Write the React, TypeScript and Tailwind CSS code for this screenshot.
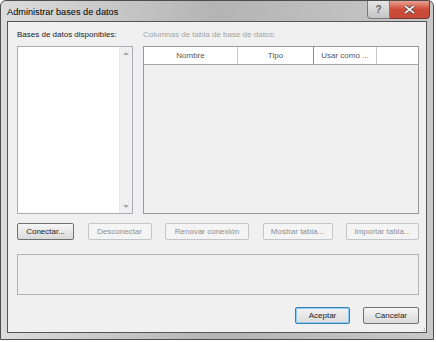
const FONT = { fontFamily: '"Liberation Sans", Arial, sans-serif' };

function Btn({ label, w, disabled, primary }: { label: string; w: number; disabled?: boolean; primary?: boolean }) {
  const base = "h-[17px] flex items-center justify-center rounded-[2px] text-[8px] leading-none border";
  const cls = disabled
    ? "border-[#c3c6c9] bg-[#f4f4f4] text-[#8d8d8d]"
    : primary
    ? "border-[#3c7fb1] bg-gradient-to-b from-[#f2f2f2] to-[#dcdcdc] text-[#1a1a1a] shadow-[inset_0_0_0_1px_#8ccdf6]"
    : "border-[#707070] bg-gradient-to-b from-[#f6f6f6] to-[#dadada] text-[#1a1a1a]";
  return (
    <div className={`${base} ${cls}`} style={{ width: w }}>
      {label}
    </div>
  );
}

export default function App() {
  return (
    <div className="w-[436px] h-[342px] bg-white" style={FONT}>
      <div className="w-[434px] h-[340px] flex flex-col rounded-t-[6px] border border-[#4d4d4d] bg-gradient-to-r from-[#dcdcdc] via-[#b4b4b4] to-[#c8c8c8]">
        {/* Title bar */}
        <div className="h-[21px] flex items-start relative">
          <span className="pl-[6px] pt-[7px] text-[9.2px] leading-none text-black">Administrar bases de datos</span>
          <div className="ml-auto flex mr-[3px]">
            <div className="w-[23px] h-[18px] flex items-center justify-center border border-[#7a7a7a] border-t-0 rounded-bl-[4px] bg-gradient-to-b from-[#e6e6e6] to-[#c4c4c4]">
              <span className="text-[10px] font-bold text-[#666] leading-none">?</span>
            </div>
            <div className="w-[40px] h-[18px] flex items-center justify-center border border-[#7a3a34] border-t-0 border-l-0 rounded-br-[4px] bg-gradient-to-b from-[#e8a090] via-[#cd4a37] to-[#c64a3a]">
              <svg width="11" height="9" viewBox="0 0 11 9">
                <path d="M1 1 L10 8 M10 1 L1 8" stroke="#3b3b3b" strokeWidth="3" />
                <path d="M1 1 L10 8 M10 1 L1 8" stroke="#f4f4f4" strokeWidth="1.6" />
              </svg>
            </div>
          </div>
        </div>

        {/* Client area */}
        <div className="flex-1 mx-[6px] mb-[6px] border border-[#555] bg-[#f0f0f0] flex flex-col pl-[9px] pr-[7px] pt-[9px] pb-[8px] relative">
          <div className="grid grid-cols-[116px_1fr] gap-x-[10px]">
            <div className="text-[8px] leading-none text-[#1a1a1a] h-[15px]">Bases de datos disponibles:</div>
            <div className="text-[8px] leading-none text-[#a3a3a3] h-[15px]">Columnas de tabla de base de datos:</div>

            {/* Left list */}
            <div className="h-[168px] border border-[#abadb3] bg-white flex">
              <div className="flex-1" />
              <div className="w-[13px] bg-[#f0f0f0] border-l border-[#e8e8e8] flex flex-col items-center justify-between py-[5px]">
                <div className="w-0 h-0 border-l-[3px] border-r-[3px] border-b-[3px] border-l-transparent border-r-transparent border-b-[#a8a8a8]" />
                <div className="w-0 h-0 border-l-[3px] border-r-[3px] border-t-[3px] border-l-transparent border-r-transparent border-t-[#a8a8a8]" />
              </div>
            </div>

            {/* Right list view */}
            <div className="h-[168px] border border-[#9a9a9a] bg-[#f0f0f0] flex flex-col">
              <div className="h-[18px] flex bg-white border-b border-[#a8a8a8] text-[8px] text-[#555] leading-none">
                <div className="w-[94px] flex items-center justify-center border-r border-[#c8c8c8]">Nombre</div>
                <div className="w-[76px] flex items-center justify-center border-r border-[#8c8c8c]">Tipo</div>
                <div className="w-[63px] flex items-center justify-center border-r border-[#c8c8c8]">Usar como ...</div>
                <div className="flex-1" />
              </div>
            </div>
          </div>

          {/* Action buttons */}
          <div className="mt-[9px] flex justify-between">
            <Btn label="Conectar..." w={57} />
            <Btn label="Desconectar" w={64} disabled />
            <Btn label="Renovar conexión" w={84} disabled />
            <Btn label="Mostrar tabla..." w={70} disabled />
            <Btn label="Importar tabla..." w={73} disabled />
          </div>

          {/* Status box */}
          <div className="mt-[14px] h-[41px] border border-[#b4b4b4] bg-[#f0f0f0]" />

          {/* OK / Cancel */}
          <div className="mt-[12px] flex justify-end gap-[13px]">
            <Btn label="Aceptar" w={55} primary />
            <Btn label="Cancelar" w={56} />
          </div>

          {/* Resize grip */}
          <div className="absolute right-[1px] bottom-[1px] grid grid-cols-3 gap-[1px]">
            <span />
            <span />
            <span className="w-[1px] h-[1px] bg-[#b0b0b0]" />
            <span />
            <span className="w-[1px] h-[1px] bg-[#b0b0b0]" />
            <span className="w-[1px] h-[1px] bg-[#b0b0b0]" />
          </div>
        </div>
      </div>
    </div>
  );
}
